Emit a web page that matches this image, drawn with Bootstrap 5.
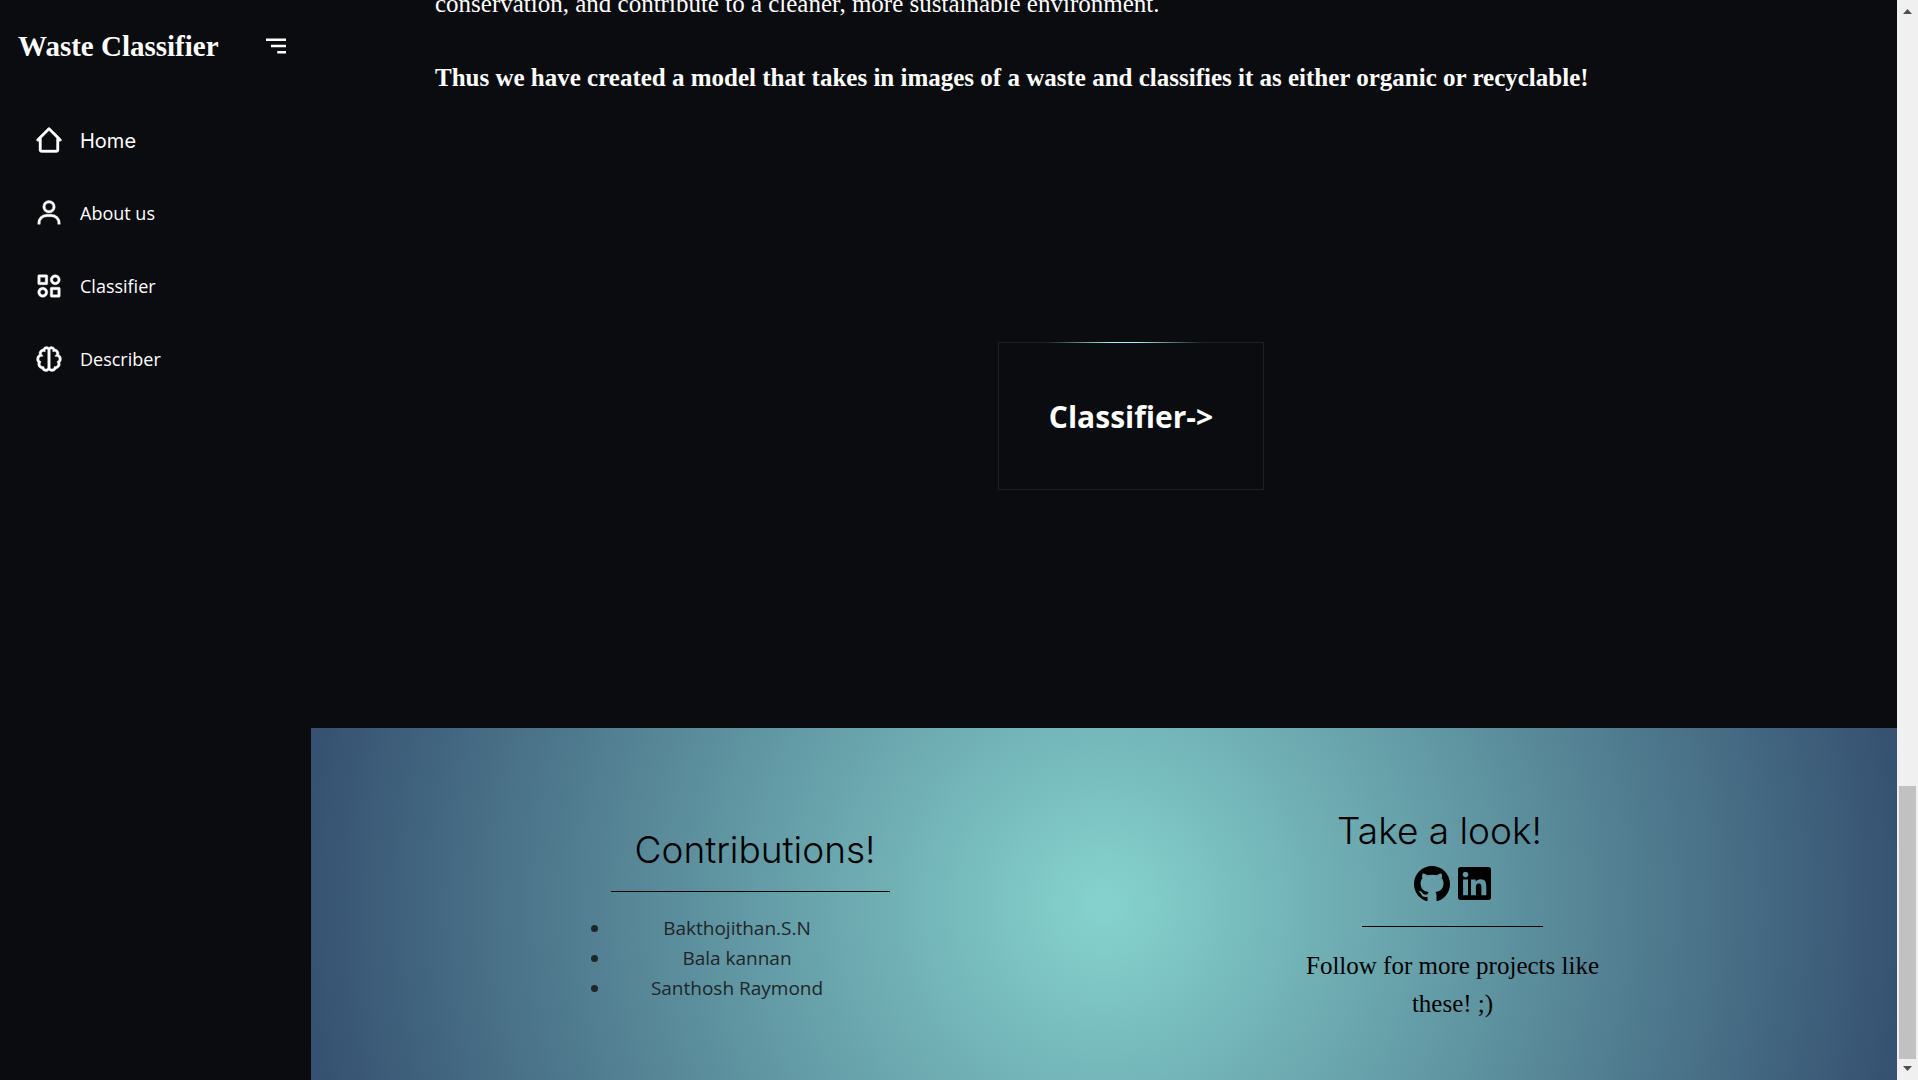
<!DOCTYPE html>
<html lang="en">
<head>
<meta charset="utf-8">
<meta name="viewport" content="width=device-width, initial-scale=1">
<title>Waste Classifier</title>
<link href="https://cdn.jsdelivr.net/npm/bootstrap@5.3.0/dist/css/bootstrap.min.css" rel="stylesheet">
<style>
  body { background: #0b0c10; color: #fff; font-family: "Open Sans", "Noto Sans", sans-serif; font-size: 20px; }
  .serif-text { font-family: "Liberation Serif", serif; }
  .geo-text { font-family: Inter, Lato, sans-serif; }

  .side-panel { width: 311px; padding: 26px 20px 0 18px; }
  .side-brand { font-size: 29px; line-height: 40px; }
  .side-links { margin-top: 37px; padding-left: 16px; }
  .side-links a { height: 73px; gap: 16px; font-size: 18px; }
  .side-links .geo-text { font-size: 20px; }
  .side-links span { padding-top: 2px; }
  .glyph { width: 30px; height: 30px; fill: #fff; }
  .side-links .glyph { stroke: #fff; stroke-width: .3; }

  .page-body { padding: 0 70px 0 124px; }
  .story { font-size: 25px; line-height: 38px; }
  .story p { margin-bottom: 36px; }
  .go-area { height: 631px; padding-top: 7px; }
  .go-btn { width: 266px; height: 148px; border: 1px solid #1b2124; border-radius: 0; background: #0b0c10; color: #fff; font-size: 30px; font-weight: 700; }
  .go-btn::before { content: ""; position: absolute; top: -1px; left: 48px; right: 62px; height: 1px; background: linear-gradient(90deg, transparent, #a6f3f6 42%, #a6f3f6 58%, transparent); }

  .foot { min-height: 352px; padding: 24px 0 0 5px; gap: 413px; color: #000; background: radial-gradient(circle, #86d3ce, #355070); }
  .foot h2 { font-size: 37px; line-height: 42px; font-weight: 300; }
  .foot hr { color: #000; opacity: 1; margin: 0 auto; }
  .foot-left { width: 279px; }
  .foot-left h2 { padding-left: 10px; margin-bottom: 20px; }
  .foot-left ul { color: #212529; font-size: 19px; line-height: 30px; padding: 0; margin: 21px 26px 0 0; }
  .foot-right { width: 300px; }
  .foot-right h2 { padding-right: 26px; margin-bottom: 14px; }
  .foot-right hr { width: 181px; }
  .foot-right p { font-size: 25px; line-height: 38px; margin: 20px 0 0; }
  .social { gap: 8px; margin-bottom: 24px; }

  .scroll-rail { width: 21px; padding: 9px 2px; background: #f0f0f0; }
  .scroll-thumb { height: 273px; margin-bottom: 7px; background: #c1c1c1; }
</style>
<script src="https://cdn.jsdelivr.net/npm/bootstrap@5.3.0/dist/js/bootstrap.bundle.min.js"></script>
</head>
<body>
<div class="d-flex vh-100 overflow-hidden">

  <nav class="side-panel flex-shrink-0">
    <div class="d-flex align-items-center justify-content-between">
      <span class="side-brand serif-text fw-bold">Waste Classifier</span>
      <button type="button" class="btn p-0 border-0 d-flex" aria-label="Toggle menu">
        <svg class="glyph" viewBox="0 0 24 24"><path d="M4 6h16v2H4zm4 5h12v2H8zm5 5h7v2h-7z"/></svg>
      </button>
    </div>
    <div class="side-links d-flex flex-column">
      <a href="#" class="d-flex align-items-center text-white text-decoration-none">
        <svg class="glyph" viewBox="0 0 24 24"><path d="M3 13h1v7c0 1.103.897 2 2 2h12c1.103 0 2-.897 2-2v-7h1a1 1 0 0 0 .707-1.707l-9-9a.999.999 0 0 0-1.414 0l-9 9A1 1 0 0 0 3 13zm9-8.586 6 6V15l.001 5H6v-9.586l6-6z"/></svg>
        <span class="geo-text">Home</span>
      </a>
      <a href="#" class="d-flex align-items-center text-white text-decoration-none">
        <svg class="glyph" viewBox="0 0 24 24"><path d="M12 2a5 5 0 1 0 5 5 5 5 0 0 0-5-5zm0 8a3 3 0 1 1 3-3 3 3 0 0 1-3 3zm9 11v-1a7 7 0 0 0-7-7h-4a7 7 0 0 0-7 7v1h2v-1a5 5 0 0 1 5-5h4a5 5 0 0 1 5 5v1z"/></svg>
        <span>About us</span>
      </a>
      <a href="#" class="d-flex align-items-center text-white text-decoration-none">
        <svg class="glyph" viewBox="0 0 24 24"><path d="M10 3H4a1 1 0 0 0-1 1v6a1 1 0 0 0 1 1h6a1 1 0 0 0 1-1V4a1 1 0 0 0-1-1zM9 9H5V5h4v4zm11 4h-6a1 1 0 0 0-1 1v6a1 1 0 0 0 1 1h6a1 1 0 0 0 1-1v-6a1 1 0 0 0-1-1zm-1 6h-4v-4h4v4zM17 3c-2.206 0-4 1.794-4 4s1.794 4 4 4 4-1.794 4-4-1.794-4-4-4zm0 6c-1.103 0-2-.897-2-2s.897-2 2-2 2 .897 2 2-.897 2-2 2zM7 13c-2.206 0-4 1.794-4 4s1.794 4 4 4 4-1.794 4-4-1.794-4-4-4zm0 6c-1.103 0-2-.897-2-2s.897-2 2-2 2 .897 2 2-.897 2-2 2z"/></svg>
        <span>Classifier</span>
      </a>
      <a href="#" class="d-flex align-items-center text-white text-decoration-none">
        <svg class="glyph" viewBox="0 0 24 24"><path d="M19.864 8.465a3.505 3.505 0 0 0-3.03-4.449A3.005 3.005 0 0 0 14 2a2.98 2.98 0 0 0-2 .78A2.98 2.98 0 0 0 10 2c-1.301 0-2.41.831-2.825 2.015a3.505 3.505 0 0 0-3.039 4.45A4.028 4.028 0 0 0 2 12c0 1.075.428 2.086 1.172 2.832A4.067 4.067 0 0 0 3 16c0 1.957 1.412 3.59 3.306 3.934A3.515 3.515 0 0 0 9.5 22c.979 0 1.864-.407 2.5-1.059A3.484 3.484 0 0 0 14.5 22a3.51 3.51 0 0 0 3.19-2.06 4.006 4.006 0 0 0 3.138-5.108A4.003 4.003 0 0 0 22 12a4.028 4.028 0 0 0-2.136-3.535zM9.5 20c-.711 0-1.33-.504-1.47-1.198L7.818 18H7c-1.103 0-2-.897-2-2 0-.352.085-.682.253-.981l.456-.816-.784-.51A2.019 2.019 0 0 1 4 12c0-.977.723-1.824 1.682-1.972l1.693-.26-1.059-1.346a1.502 1.502 0 0 1 1.498-2.39L9 6.207V5a1 1 0 0 1 2 0v13.5c0 .827-.673 1.5-1.5 1.5zm9.575-6.308-.784.51.456.816c.168.3.253.63.253.982 0 1.103-.897 2-2 2h-.818l-.212.802A1.502 1.502 0 0 1 14.5 20c-.827 0-1.5-.673-1.5-1.5V5a1 1 0 0 1 2 0v1.207l1.186-.175a1.502 1.502 0 0 1 1.498 2.39l-1.059 1.347 1.693.26A2.002 2.002 0 0 1 20 12c0 .683-.346 1.315-.925 1.692z"/></svg>
        <span>Describer</span>
      </a>
    </div>
  </nav>

  <main class="flex-grow-1 d-flex flex-column justify-content-end overflow-hidden">
    <div class="page-body">
      <div class="story serif-text">
        <p>conservation, and contribute to a cleaner, more sustainable environment.</p>
        <p class="fw-bold mb-0">Thus we have created a model that takes in images of a waste and classifies it as either organic or recyclable!</p>
      </div>
      <div class="go-area d-flex align-items-center justify-content-center">
        <button type="button" class="btn go-btn position-relative">Classifier-&gt;</button>
      </div>
    </div>
    <footer class="foot d-flex flex-shrink-0 align-items-center justify-content-center text-center">
      <section class="foot-left">
        <h2 class="geo-text">Contributions!</h2>
        <hr>
        <ul>
          <li>Bakthojithan.S.N</li>
          <li>Bala kannan</li>
          <li>Santhosh Raymond</li>
        </ul>
      </section>
      <section class="foot-right">
        <h2 class="geo-text">Take a look!</h2>
        <div class="social d-flex justify-content-center align-items-center">
          <a href="#" class="d-flex" aria-label="GitHub"><svg width="36" height="36" viewBox="0 0 16 16"><path d="M8 0C3.58 0 0 3.58 0 8c0 3.54 2.29 6.53 5.47 7.59.4.07.55-.17.55-.38 0-.19-.01-.82-.01-1.49-2.01.37-2.53-.49-2.69-.94-.09-.23-.48-.94-.82-1.13-.28-.15-.68-.52-.01-.53.63-.01 1.08.58 1.23.82.72 1.21 1.87.87 2.33.66.07-.52.28-.87.51-1.07-1.78-.2-3.64-.89-3.64-3.95 0-.87.31-1.59.82-2.15-.08-.2-.36-1.02.08-2.12 0 0 .67-.21 2.2.82.64-.18 1.32-.27 2-.27s1.36.09 2 .27c1.53-1.04 2.2-.82 2.2-.82.44 1.1.16 1.92.08 2.12.51.56.82 1.27.82 2.15 0 3.07-1.87 3.75-3.65 3.95.29.25.54.73.54 1.48 0 1.07-.01 1.93-.01 2.2 0 .21.15.46.55.38A8.01 8.01 0 0 0 16 8c0-4.42-3.58-8-8-8z"/></svg></a>
          <a href="#" class="d-flex" aria-label="LinkedIn"><svg width="33" height="33" viewBox="0 32 448 448"><path d="M416 32H31.9C14.3 32 0 46.5 0 64.3v383.4C0 465.5 14.3 480 31.9 480H416c17.6 0 32-14.5 32-32.3V64.3c0-17.8-14.4-32.3-32-32.3zM135.4 416H69V202.2h66.5V416zm-33.2-243c-21.3 0-38.5-17.3-38.5-38.5S80.9 96 102.2 96c21.2 0 38.5 17.3 38.5 38.5 0 21.3-17.2 38.5-38.5 38.5zm282.1 243h-66.4V312c0-24.8-.5-56.7-34.5-56.7-34.6 0-39.9 27-39.9 54.9V416h-66.4V202.2h63.7v29.2h.9c8.9-16.8 30.6-34.5 62.9-34.5 67.2 0 79.7 44.3 79.7 101.9V416z"/></svg></a>
        </div>
        <hr>
        <p class="serif-text">Follow for more projects like these! ;)</p>
      </section>
    </footer>
  </main>

  <div class="scroll-rail flex-shrink-0 d-flex flex-column" aria-hidden="true">
    <svg class="mx-auto" width="9" height="5" viewBox="0 0 9 5"><path fill="#505050" d="M0 5 4.5 0 9 5z"/></svg>
    <div class="scroll-thumb mt-auto"></div>
    <svg class="mx-auto" width="9" height="5" viewBox="0 0 9 5"><path fill="#505050" d="M0 0h9L4.5 5z"/></svg>
  </div>

</div>
</body>
</html>
